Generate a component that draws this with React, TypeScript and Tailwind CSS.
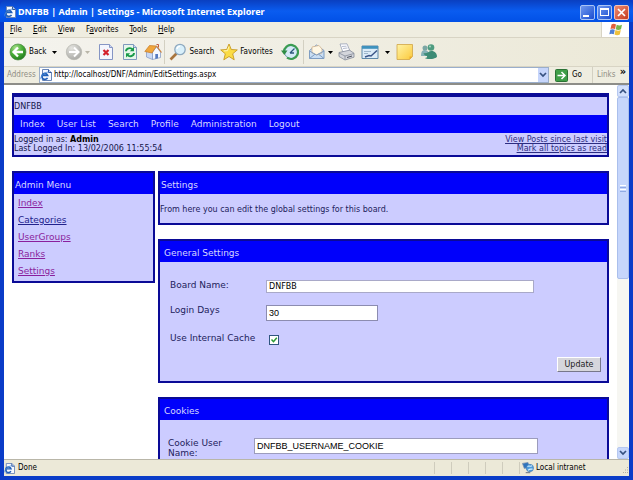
import type { ReactNode } from "react"

const menus = ["File", "Edit", "View", "Favorites", "Tools", "Help"]

const navLinks = ["Index", "User List", "Search", "Profile", "Administration", "Logout"]

const adminLinks = [
  { text: "Index", visited: true },
  { text: "Categories", visited: false },
  { text: "UserGroups", visited: true },
  { text: "Ranks", visited: true },
  { text: "Settings", visited: true },
]

function PageIcon({ className = "h-3 w-3" }: { className?: string }) {
  return (
    <svg viewBox="0 0 12 12" className={className + " shrink-0"} aria-hidden="true">
      <path d="M2.5.5h6l3 3v8h-9z" fill="#f4f8ff" stroke="#6a86b8" />
      <path d="M8.5.5v3h3" fill="#bcd0f0" stroke="#33599c" />
      <path d="M7.500 8.800A3 3 0 1 1 7.700 6.400H2" fill="none" stroke="#1f5fb8" strokeWidth="1.600" />
      <path d="M1 10.400C-.5 8 4 3.300 8.500 3" fill="none" stroke="#4c8fdc" strokeWidth=".8" />
    </svg>
  )
}

function BackIcon() {
  return (
    <svg viewBox="0 0 18 18" className="h-[18px] w-[18px]" aria-hidden="true">
      <defs>
        <radialGradient id="back" cx="35%" cy="25%" r="80%">
          <stop offset="0" stopColor="#a8e08c" />
          <stop offset=".5" stopColor="#4cb03a" />
          <stop offset="1" stopColor="#1f7a1c" />
        </radialGradient>
      </defs>
      <circle cx="9" cy="9" r="8" fill="url(#back)" stroke="#4d8a45" strokeWidth=".7" />
      <path d="M14 9H5M9 4.500 4.500 9 9 13.500" fill="none" stroke="#fff" strokeWidth="2.300" />
    </svg>
  )
}

function ForwardIcon() {
  return (
    <svg viewBox="0 0 18 18" className="h-[18px] w-[18px]" aria-hidden="true">
      <defs>
        <radialGradient id="fwd" cx="35%" cy="25%" r="80%">
          <stop offset="0" stopColor="#e4e4e0" />
          <stop offset="1" stopColor="#a9a9a5" />
        </radialGradient>
      </defs>
      <circle cx="9" cy="9" r="7.700" fill="url(#fwd)" stroke="#b4b4ae" strokeWidth=".7" />
      <path d="M4 9h9M9 4.500 13.500 9 9 13.500" fill="none" stroke="#fff" strokeWidth="2" />
    </svg>
  )
}

function StopIcon() {
  return (
    <svg viewBox="0 0 16 18" className="h-[18px] w-4" aria-hidden="true">
      <path d="M1.500 1.500h10l3 3v12h-13z" fill="#f3f5fd" stroke="#8595c4" />
      <path d="M11.500 1.500v3h3" fill="#cdd7f2" stroke="#8595c4" />
      <path d="m5.500 7 5 5M10.500 7l-5 5" stroke="#d3202c" strokeWidth="2.200" />
    </svg>
  )
}

function RefreshIcon() {
  return (
    <svg viewBox="0 0 16 18" className="h-[18px] w-4" aria-hidden="true">
      <path d="M1.500 1.500h10l3 3v12h-13z" fill="#e6f6ea" stroke="#8099bd" />
      <path d="M11.500 1.500v3h3" fill="#cdd7f2" stroke="#8099bd" />
      <path d="M4 8.300c0-3 4.500-4.300 6.500-2" fill="none" stroke="#189a48" strokeWidth="1.900" />
      <path d="M12 4v4.300H7.800z" fill="#189a48" />
      <path d="M12 10c0 3-4.500 4.300-6.500 2" fill="none" stroke="#189a48" strokeWidth="1.900" />
      <path d="M4 14.500v-4.300h4.200z" fill="#189a48" />
    </svg>
  )
}

function HomeIcon() {
  return (
    <svg viewBox="0 0 18 18" className="h-[18px] w-[18px]" aria-hidden="true">
      <path d="M2.500 8v6l6 2.500V9z" fill="#c9d8f4" stroke="#7d93c0" strokeWidth=".7" />
      <path d="M8.500 9 12.500 4l4 5v5.500l-8 2z" fill="#f5f8ff" stroke="#7d93c0" strokeWidth=".7" />
      <path d="M.8 8.500 5.500 2.500 12.500 3 8 10z" fill="#f0a63c" stroke="#c47a26" strokeWidth=".7" />
      <path d="m12.500 3 5 6.500" stroke="#c97b35" strokeWidth="1.200" />
      <path d="M11.300 11h2.700v4.300l-2.700.6z" fill="#5579c0" />
      <path d="M12.500 1.500h2v3" fill="none" stroke="#bd5b41" />
    </svg>
  )
}

function SearchIcon() {
  return (
    <svg viewBox="0 0 18 18" className="h-[18px] w-[18px]" aria-hidden="true">
      <path d="m7.500 10.500-6 6" stroke="#a8753e" strokeWidth="2.600" />
      <circle cx="11" cy="6.500" r="5.200" fill="#d9f0fb" stroke="#8ea9bf" strokeWidth="1.300" />
      <path d="M8 6a3 3 0 0 1 3-2.700" fill="none" stroke="#fff" strokeWidth="1.300" />
    </svg>
  )
}

function StarIcon() {
  return (
    <svg viewBox="0 0 18 18" className="h-[18px] w-[18px]" aria-hidden="true">
      <path
        d="m9 1 2.300 5.500 6 .4-4.600 3.900 1.500 6L9 13.500l-5.200 3.300 1.500-6L.7 6.900l6-.4z"
        fill="#fbdc45"
        stroke="#c79a22"
        strokeWidth=".9"
      />
      <path d="M9 3.500 7.500 7.700l-3.800.2" fill="none" stroke="#fff6b8" />
    </svg>
  )
}

function HistoryIcon() {
  return (
    <svg viewBox="0 0 18 18" className="h-[18px] w-[18px]" aria-hidden="true">
      <circle cx="10" cy="9" r="6.500" fill="#d5eaf6" stroke="#6f95ad" />
      <path d="M3 9a7 7 0 1 1 3 5.700" fill="none" stroke="#3b9c52" strokeWidth="2.200" />
      <path d="M0 7.500h6.500L3.300 12z" fill="#2f8d45" />
      <path d="m9 10 4.500-4.500M9 10h4" stroke="#2d587c" strokeWidth="1.300" />
    </svg>
  )
}

function MailIcon() {
  return (
    <svg viewBox="0 0 18 18" className="h-[18px] w-[18px]" aria-hidden="true">
      <path d="M1.500 7.500 8.500 2l7.500 5.500v8h-14.500z" fill="#c9def4" stroke="#7f9dc2" />
      <path d="m4 4 7-1.500 3 3.500v4l-5 2-5-2z" fill="#fff7e4" stroke="#cfae84" strokeWidth=".7" />
      <path d="M1.500 8 8.500 12 16 8M1.500 15.500 7 11.200m9 4.300-5.500-4.300" fill="none" stroke="#7f9dc2" />
    </svg>
  )
}

function PrintIcon() {
  return (
    <svg viewBox="0 0 18 18" className="h-[18px] w-[18px]" aria-hidden="true">
      <path d="m3 1 7-.2 3 7.200-7 1.500z" fill="#fdfdff" stroke="#97a0b4" strokeWidth=".8" />
      <path d="m5 3.500 4.500-.3M6 5.500l4.500-.5" stroke="#a4adc2" strokeWidth=".8" />
      <path d="m2 9.500 10.500-2.300 4.500 3v4L8 17l-6-3.500z" fill="#d4d6dc" stroke="#848a98" strokeWidth=".8" />
      <path d="M2 10 8 13l9-2.500M8 13v3.500" fill="none" stroke="#848a98" strokeWidth=".8" />
      <path d="m10 14.500 5-1.500" stroke="#4b505c" />
    </svg>
  )
}

function EditIcon() {
  return (
    <svg viewBox="0 0 18 18" className="h-[18px] w-[18px]" aria-hidden="true">
      <path d="M1 3h16v12.500H1z" fill="#dcecf8" stroke="#5c87a8" />
      <path d="M1 3h16v2.800H1z" fill="#3f92bd" />
      <path d="M3 8.500h7M3 10.500h4" stroke="#9db6cc" />
      <path d="m4 14 4-1.500 2 .5 6-5.500" fill="none" stroke="#3c5688" strokeWidth="1.500" />
    </svg>
  )
}

function NoteIcon() {
  return (
    <svg viewBox="0 0 18 18" className="h-[18px] w-[18px]" aria-hidden="true">
      <defs>
        <linearGradient id="note" x1="0" y1="0" x2="1" y2="1">
          <stop offset="0" stopColor="#fff3a6" />
          <stop offset="1" stopColor="#fbc93a" />
        </linearGradient>
      </defs>
      <path d="M1 1.500h15.500v12L13.500 16.500H1z" fill="url(#note)" stroke="#d0a545" strokeWidth=".8" />
      <path d="M16.500 13.500h-3v3z" fill="#e9ac32" />
    </svg>
  )
}

function MessengerIcon() {
  return (
    <svg viewBox="0 0 18 18" className="h-[18px] w-[18px]" aria-hidden="true">
      <circle cx="5" cy="5" r="2.500" fill="#7ba7a4" />
      <path d="M1 13c0-4.500 1.500-6 4-6s4 2 4 6z" fill="#86b1b6" />
      <circle cx="11" cy="4.500" r="3.300" fill="#4f9c80" />
      <path d="M3.500 10c3 1.500 5-2 8-2 3.500 0 5.500 2.500 5.500 5.500 0 2.500-10.500 3.500-12 1.500 1.500 0 2.500-1 2-2-1.500 0-3-1-3.500-3z" fill="#3d8b75" />
      <circle cx="10" cy="3.500" r="1" fill="#a9d8c4" />
    </svg>
  )
}

function GoIcon() {
  return (
    <svg viewBox="0 0 13 13" className="h-[13px] w-[13px]" aria-hidden="true">
      <rect x=".5" y=".5" width="12" height="12" rx="1" fill="#3f9e47" stroke="#2b7235" />
      <path d="M2.500 6.500H10M6.500 3 10 6.500 6.500 10" fill="none" stroke="#fff" strokeWidth="1.500" />
    </svg>
  )
}

function WindowsFlag() {
  return (
    <svg viewBox="0 0 14 13" className="h-[13px] w-[14px]" aria-hidden="true">
      <path d="M2.500 1.500C4 .5 5.500.7 7 1.500L6 6C4.500 5.300 3 5.300 1.500 6z" fill="#e0603c" />
      <path d="M7.700 1.800C9.500 2.700 11.500 2.600 13 1.800L12 6.300c-1.700.8-3.700.8-5.300 0z" fill="#77b64c" />
      <path d="M1.300 6.800c1.500-.7 3-.7 4.500 0l-1 4.500c-1.500-.8-3-.8-4.500 0z" fill="#4f7fd4" />
      <path d="M6.500 7.100c1.700.9 3.600.8 5.300 0l-1 4.500c-1.800.9-3.600.8-5.300 0z" fill="#efc13c" />
    </svg>
  )
}

function IntranetIcon() {
  return (
    <svg viewBox="0 0 13 13" className="h-3 w-3" aria-hidden="true">
      <path d="m.5 1.500 6-1 1.500 5-5.500 1.500z" fill="#2e74bd" stroke="#8094ad" strokeWidth=".8" />
      <circle cx="8.500" cy="6.500" r="4" fill="#4f9cdc" stroke="#3a6fa8" strokeWidth=".6" />
      <path d="M6 5c2-2 3 1 5-1M6.500 9c2-2 3-1 5-1.500" stroke="#d3efff" strokeWidth="1.200" fill="none" />
      <path d="M4 11.500h5" stroke="#7d8794" strokeWidth="1.300" />
    </svg>
  )
}

function Caret({ dim = false }: { dim?: boolean }) {
  return (
    <svg viewBox="0 0 5 3" className={dim ? "h-[3px] w-[5px] text-[#b9b6a8]" : "h-[3px] w-[5px] text-black"} aria-hidden="true">
      <path d="M0 0h5L2.500 3z" fill="currentColor" />
    </svg>
  )
}

function Chevron({ up = false }: { up?: boolean }) {
  return (
    <svg viewBox="0 0 8 6" className="h-[6px] w-2" aria-hidden="true">
      <path d={up ? "m1 5 3-3 3 3" : "m1 1 3 3 3-3"} fill="none" stroke="#35507f" strokeWidth="1.700" />
    </svg>
  )
}

function ToolButton({ label, children, className = "" }: { label: string; children: ReactNode; className?: string }) {
  return (
    <button type="button" aria-label={label} className={"flex shrink-0 items-center gap-0.5 " + className}>
      {children}
    </button>
  )
}

function TitleBar() {
  return (
    <header className="flex h-[22px] shrink-0 items-center gap-0.5 rounded-t-md bg-linear-to-b from-[#0a3fc0] via-[#0a5cf0] to-[#0250e6] pt-0.5 pr-1 pl-1">
      <PageIcon />
      <h1 className="flex-1 font-['Noto_Sans','Liberation_Sans',sans-serif] text-[9px] leading-4 font-bold whitespace-nowrap text-white">
        DNFBB | Admin | Settings - Microsoft Internet Explorer
      </h1>
      <div className="flex gap-0.5">
        <button type="button" aria-label="Minimize" className="flex h-[15px] w-[15px] items-end rounded-xs border border-[#a9c4f5] bg-linear-to-br from-[#6f97ee] to-[#1c4cd0] p-0.5">
          <span className="h-0.5 w-1.5 bg-white" />
        </button>
        <button type="button" aria-label="Maximize" className="flex h-[15px] w-[15px] items-center justify-center rounded-xs border border-[#a9c4f5] bg-linear-to-br from-[#6f97ee] to-[#1c4cd0]">
          <span className="h-2 w-[9px] border border-t-2 border-white" />
        </button>
        <button type="button" aria-label="Close" className="flex h-[15px] w-[15px] items-center justify-center rounded-xs border border-[#f1c4ba] bg-linear-to-br from-[#ee8a70] to-[#c43a1c]">
          <svg viewBox="0 0 9 9" className="h-[9px] w-[9px]" aria-hidden="true">
            <path d="m1 1 7 7M8 1 1 8" stroke="#fff" strokeWidth="1.700" />
          </svg>
        </button>
      </div>
    </header>
  )
}

function MenuBar() {
  return (
    <div className="flex h-4 shrink-0 border-b border-[#d8d4c4] bg-[#efede0]">
      <nav className="flex flex-1 items-center gap-[11px] pl-1.5">
        {menus.map((m) => (
          <button key={m} type="button">
            {m === "Favorites" ? (
              <>
                F<span className="underline">a</span>vorites
              </>
            ) : (
              <>
                <span className="underline">{m[0]}</span>
                {m.slice(1)}
              </>
            )}
          </button>
        ))}
      </nav>
      <div className="flex w-7 items-center justify-center border-l border-[#d8d4c4] bg-white">
        <WindowsFlag />
      </div>
    </div>
  )
}

function Toolbar() {
  return (
    <div className="flex h-[29px] shrink-0 items-center border-b border-[#d8d4c4] bg-linear-to-r from-[#f4f3ee] to-[#ece9d8] pl-[5px]">
      <ToolButton label="Back" className="mr-2">
        <BackIcon />
        <span className="mr-1">Back</span>
        <Caret />
      </ToolButton>
      <ToolButton label="Forward" className="mr-2">
        <ForwardIcon />
        <Caret dim />
      </ToolButton>
      <ToolButton label="Stop" className="mr-2">
        <StopIcon />
      </ToolButton>
      <ToolButton label="Refresh" className="mr-1.5">
        <RefreshIcon />
      </ToolButton>
      <ToolButton label="Home" className="mr-0.5">
        <HomeIcon />
      </ToolButton>
      <span className="mr-1 h-6 w-px bg-[#d3d0c2]" />
      <ToolButton label="Search" className="mr-1.5">
        <SearchIcon />
        <span>Search</span>
      </ToolButton>
      <ToolButton label="Favorites" className="mr-2">
        <StarIcon />
        <span>Favorites</span>
      </ToolButton>
      <ToolButton label="History" className="mr-1">
        <HistoryIcon />
      </ToolButton>
      <span className="mr-1 h-6 w-px bg-[#d3d0c2]" />
      <ToolButton label="Mail" className="mr-1">
        <MailIcon />
        <Caret />
      </ToolButton>
      <ToolButton label="Print" className="mr-1.5">
        <PrintIcon />
      </ToolButton>
      <ToolButton label="Edit" className="mr-1.5">
        <EditIcon />
        <span className="w-0.5" />
        <Caret />
      </ToolButton>
      <ToolButton label="Notes" className="mr-1.5">
        <NoteIcon />
      </ToolButton>
      <ToolButton label="Messenger">
        <MessengerIcon />
      </ToolButton>
    </div>
  )
}

function AddressBar() {
  return (
    <form className="flex h-[18px] shrink-0 items-center border-b-2 border-[#8d8d88] bg-[#efede0] pl-[3px]">
      <label htmlFor="address" className="w-8 text-[#8f8d84]">
        Address
      </label>
      <div className="flex h-4 flex-1 items-center border border-[#9aaecb] bg-white">
        <PageIcon />
        <input id="address" defaultValue="http://localhost/DNF/Admin/EditSettings.aspx" className="min-w-0 flex-1 pl-0.5 outline-none" />
        <button type="button" aria-label="Show addresses" className="flex h-3.5 w-2.5 items-center justify-center bg-[#c6d5fb]">
          <Chevron />
        </button>
      </div>
      <button type="button" className="ml-1 flex items-center gap-1 pr-2.5 pl-0.5">
        <GoIcon />
        Go
      </button>
      <span className="h-4 w-px bg-[#d3d0c2]" />
      <span className="w-6 pl-1 text-[#8f8d84]">Links</span>
      <span className="w-3 self-start text-center text-[11px] leading-[10px] font-bold">»</span>
    </form>
  )
}

function Banner() {
  return (
    <div className="border-2 border-t-4 border-[#0a0a96] bg-[#ccccff] text-[8px] leading-[9px] text-[#14144a]">
      <p className="flex h-[18px] items-center">DNFBB</p>
      <nav className="flex h-[18px] items-center gap-3 bg-[#0000fb] pl-1.5 text-[9px] text-[#d8d8ff]">
        {navLinks.map((l) => (
          <a key={l} href="#">
            {l}
          </a>
        ))}
      </nav>
      <div className="flex h-[22px] items-center justify-between">
        <div>
          <p>
            Logged in as: <b className="text-black">Admin</b>
          </p>
          <p>Last Logged In: 13/02/2006 11:55:54</p>
        </div>
        <div className="flex flex-col items-end text-[#2c2c80] underline">
          <a href="#">View Posts since last visit</a>
          <a href="#">Mark all topics as read</a>
        </div>
      </div>
    </div>
  )
}

function Panel({ title, children, inset = false }: { title: string; children: ReactNode; inset?: boolean }) {
  return (
    <section className="border-2 border-[#0a0a96] bg-[#ccccff]">
      <h2 className={inset ? "bg-[#0000fb] pt-1.5 pl-1 text-[#d8d8ff]" : "bg-[#0000fb] pt-1.5 pl-px text-[#d8d8ff]"}>
        <span className="block h-[15px] leading-[13px]">{title}</span>
      </h2>
      {children}
    </section>
  )
}

function ScrollBar() {
  return (
    <div className="flex w-3 shrink-0 flex-col items-center bg-[#f6f6f2]">
      <button type="button" aria-label="Scroll up" className="flex h-3 w-full items-center justify-center rounded-xs border border-[#b6c8f0] bg-[#d3e0fc]">
        <Chevron up />
      </button>
      <div className="flex w-full flex-1 flex-col">
        <div className="flex h-[52%] w-full flex-col items-center justify-center gap-px rounded-xs border border-[#aabfec] bg-[#c6d6fb]">
          <span className="h-px w-1.5 bg-white" />
          <span className="h-px w-1.5 bg-[#8faae4]" />
          <span className="h-px w-1.5 bg-white" />
          <span className="h-px w-1.5 bg-[#8faae4]" />
        </div>
      </div>
      <button type="button" aria-label="Scroll down" className="flex h-3 w-full items-center justify-center rounded-xs border border-[#b6c8f0] bg-[#c6d6fb]">
        <Chevron />
      </button>
    </div>
  )
}

function Page() {
  return (
    <main className="min-w-0 flex-1 overflow-hidden px-2 pt-2 font-['DejaVu_Sans',Verdana,sans-serif] text-[9px] leading-[11px] text-[#22225c]">
      <Banner />
      <div className="mt-3.5 flex items-start gap-[3px]">
        <aside className="w-[143px] shrink-0">
          <Panel title="Admin Menu">
            <ul className="flex flex-col gap-1.5 px-1 py-1">
              {adminLinks.map((l) => (
                <li key={l.text}>
                  <a href="#" className={l.visited ? "text-[#8a1f9c] underline" : "text-[#22228c] underline"}>
                    {l.text}
                  </a>
                </li>
              ))}
            </ul>
          </Panel>
        </aside>
        <div className="flex min-w-0 flex-1 flex-col gap-3.5">
          <Panel title="Settings">
            <p className="pt-[10px] pb-2 text-[8px]">From here you can edit the global settings for this board.</p>
          </Panel>
          <Panel title="General Settings" inset>
            <form className="pt-[18px] pr-1.5 pb-[9px] pl-[10px]">
              <div className="flex h-[25px] items-start">
                <label htmlFor="board" className="w-24 shrink-0">
                  Board Name:
                </label>
                <input id="board" defaultValue="DNFBB" className="h-[13px] w-[268px] border border-[#a9a9c8] bg-white px-0.5 text-[8px] text-black" />
              </div>
              <div className="flex h-7 items-start">
                <label htmlFor="days" className="w-24 shrink-0">
                  Login Days
                </label>
                <input
                  id="days"
                  defaultValue="30"
                  className="h-4 w-28 border border-[#8c8cb0] bg-white px-0.5 font-['Liberation_Sans',Arial,sans-serif] text-[9px] text-black"
                />
              </div>
              <div className="flex h-6 items-start">
                <label htmlFor="cache" className="w-24 shrink-0">
                  Use Internal Cache
                </label>
                <span className="grid pt-0.5 pl-[3px]">
                  <input id="cache" type="checkbox" defaultChecked className="peer col-start-1 row-start-1 h-[10px] w-[10px] appearance-none border border-[#2f5680] bg-white" />
                  <svg viewBox="0 0 10 10" className="pointer-events-none invisible col-start-1 row-start-1 h-[10px] w-[10px] peer-checked:visible" aria-hidden="true">
                    <path d="m2.500 4.500 2 2.200 3.300-4" fill="none" stroke="#2a9a34" strokeWidth="1.500" />
                  </svg>
                </span>
              </div>
              <div className="flex justify-end">
                <button type="button" className="h-[15px] w-11 border border-t-white border-r-[#77778a] border-b-[#77778a] border-l-white bg-[#d6d6dc] text-[8px] text-[#222]">
                  Update
                </button>
              </div>
            </form>
          </Panel>
          <Panel title="Cookies" inset>
            <form className="flex px-2 pt-[18px] pb-6 leading-[10px]">
              <label htmlFor="cookie" className="w-[86px] shrink-0 pr-6">
                Cookie User Name:
              </label>
              <input
                id="cookie"
                defaultValue="DNFBB_USERNAME_COOKIE"
                className="h-4 w-[284px] border border-[#9c9cbc] bg-white px-0.5 font-['Liberation_Sans',Arial,sans-serif] text-[9px] text-black"
              />
            </form>
          </Panel>
        </div>
      </div>
    </main>
  )
}

function StatusBar() {
  return (
    <footer className="flex h-[17px] shrink-0 items-center border-t border-[#b9b6a8] bg-[#ece9d8]">
      <PageIcon className="h-[11px] w-[11px]" />
      <span className="flex-1 pl-[3px]">Done</span>
      {[0, 1, 2, 3, 4].map((i) => (
        <span key={i} className="h-3 w-[17px] border-l border-[#cfccbd]" />
      ))}
      <div className="flex w-[110px] items-center gap-0.5 border-l border-[#cfccbd] pl-0.5">
        <IntranetIcon />
        <span className="flex-1">Local intranet</span>
        <svg viewBox="0 0 8 8" className="h-2 w-2 self-end" aria-hidden="true">
          <path d="M6 1h1v1H6zM4 3.500h1v1H4zM6 3.500h1v1H6zM2 6h1v1H2zM4 6h1v1H4zM6 6h1v1H6z" fill="#b3b0a0" />
        </svg>
      </div>
    </footer>
  )
}

export default function App() {
  return (
    <div className="flex h-screen flex-col bg-[#0a3cc8] font-['DejaVu_Sans_Condensed','DejaVu_Sans',Tahoma,sans-serif] text-[8px] leading-[10px] text-black">
      <TitleBar />
      <div className="flex min-h-0 flex-1 flex-col border-x-4 border-b-4 border-[#0a3cc8] bg-white">
        <MenuBar />
        <Toolbar />
        <AddressBar />
        <div className="flex min-h-0 flex-1">
          <Page />
          <ScrollBar />
        </div>
        <StatusBar />
      </div>
    </div>
  )
}
